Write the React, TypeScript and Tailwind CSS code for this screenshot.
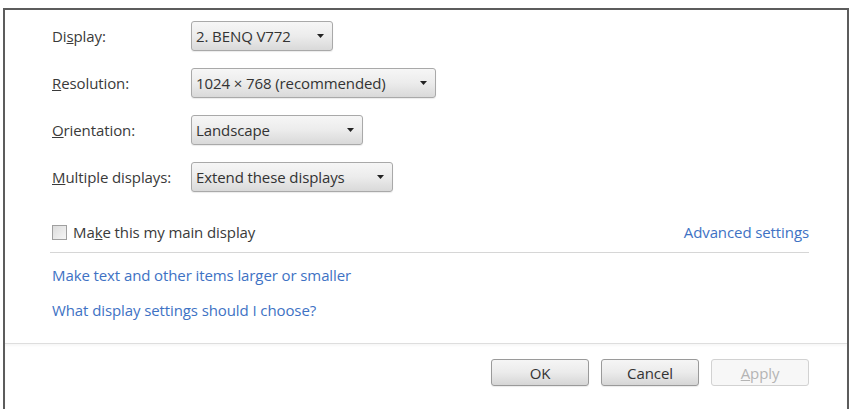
import React from 'react'

const font = { fontFamily: '"Open Sans", "Noto Sans", sans-serif' }

function Combo({ value, width }: { value: string; width: string }) {
  return (
    <div
      className={`${width} h-[30px] flex items-center justify-between pl-[4px] pr-[8px] rounded-[3px] border border-[#a9a9a9] bg-gradient-to-b from-[#f6f6f6] via-[#ececec] to-[#d9d9d9] shadow-[0_1px_1px_rgba(0,0,0,0.08)] text-[#333]`}
    >
      <span>{value}</span>
      <svg width="7" height="4" viewBox="0 0 7 4">
        <path d="M0 0 L7 0 L3.5 4 Z" fill="#222" />
      </svg>
    </div>
  )
}

function Row({ label, combo }: { label: React.ReactNode; combo: React.ReactNode }) {
  return (
    <div className="flex items-center h-[30px]">
      <div className="w-[139px] text-[#3a3a3a] whitespace-nowrap">{label}</div>
      {combo}
    </div>
  )
}

function Btn({ children, disabled }: { children: React.ReactNode; disabled?: boolean }) {
  return (
    <button
      className={
        disabled
          ? 'w-[98px] h-[27px] rounded-[3px] border border-[#d2d2d2] bg-[#f7f7f7] text-[#b4b4b4]'
          : 'w-[98px] h-[27px] rounded-[3px] border border-[#9a9a9a] bg-gradient-to-b from-[#f5f5f5] via-[#ebebeb] to-[#d6d6d6] text-[#333] shadow-[0_1px_1px_rgba(0,0,0,0.08)]'
      }
    >
      {children}
    </button>
  )
}

export default function App() {
  return (
    <div className="w-[851px] h-[409px] bg-white pt-2 pl-[3px] pr-[2px] text-[15px] leading-[20px] tracking-[-0.1px]" style={font}>
      <div className="h-[401px] border-t-2 border-x-2 border-[#5c5c5c] flex flex-col">
        {/* settings area */}
        <div className="flex-1 pl-[47px] pr-[38px] pt-[11px]">
          <div className="flex flex-col gap-[17px]">
            <Row label={<>Di<u>s</u>play:</>} combo={<Combo value="2. BENQ V772" width="w-[142px]" />} />
            <Row label={<><u>R</u>esolution:</>} combo={<Combo value="1024 × 768 (recommended)" width="w-[245px]" />} />
            <Row label={<><u>O</u>rientation:</>} combo={<Combo value="Landscape" width="w-[172px]" />} />
            <Row label={<><u>M</u>ultiple displays:</>} combo={<Combo value="Extend these displays" width="w-[202px]" />} />
          </div>

          <div className="mt-[30px] h-[20px] flex items-center justify-between">
            <label className="flex items-center gap-[6px] text-[#3a3a3a]">
              <span className="w-[15px] h-[15px] border border-[#a0a0a0] bg-gradient-to-br from-[#dcdcdc] to-[#f6f6f6]" />
              <span>Ma<u>k</u>e this my main display</span>
            </label>
            <a className="text-[#3e72c4]">Advanced settings</a>
          </div>

          <div className="mt-[10px] -ml-[2px] border-t border-[#d6d6d6]" />

          <div className="mt-[12px] text-[#3e72c4]">Make text and other items larger or smaller</div>
          <div className="mt-[15px] text-[#3e72c4]">What display settings should I choose?</div>
        </div>

        {/* button bar */}
        <div className="h-[66px] border-t border-[#dedede] shadow-[inset_0_2px_2px_rgba(0,0,0,0.03)] flex justify-end items-start gap-[12px] pt-[15px] pr-[38px]">
          <Btn>OK</Btn>
          <Btn>Cancel</Btn>
          <Btn disabled><u>A</u>pply</Btn>
        </div>
      </div>
    </div>
  )
}
